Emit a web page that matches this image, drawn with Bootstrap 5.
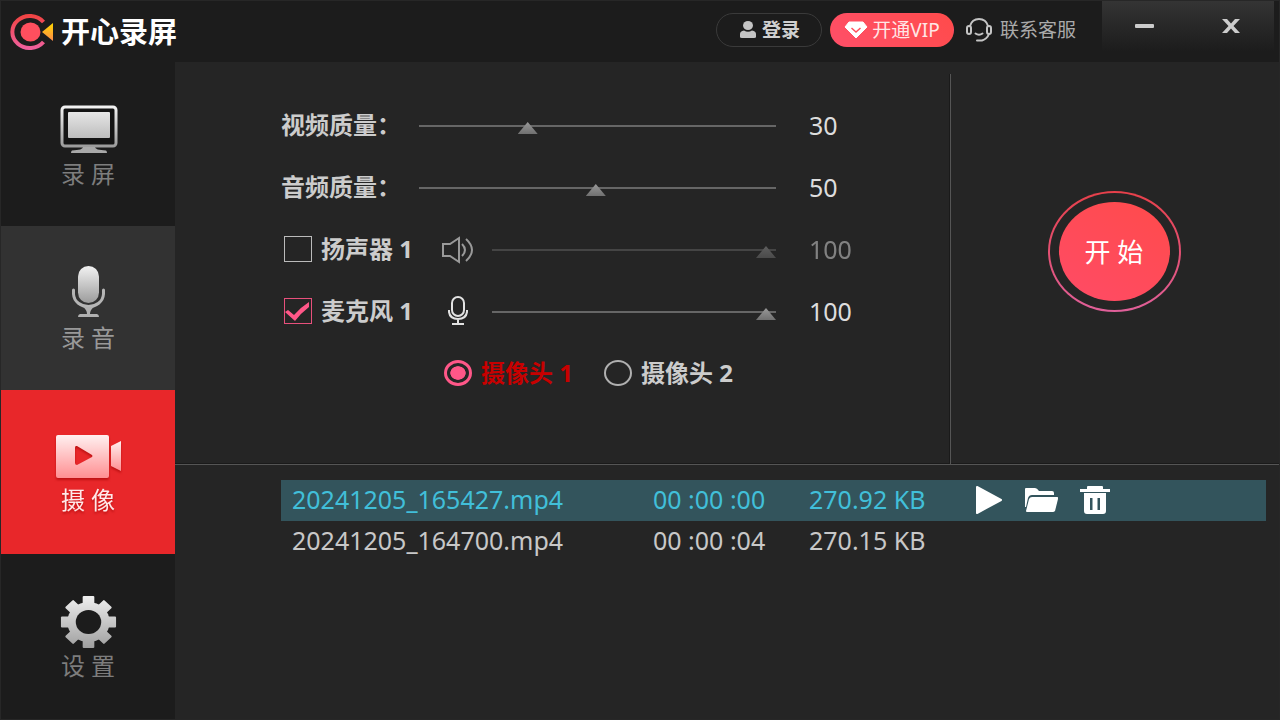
<!DOCTYPE html>
<html lang="zh-CN">
<head>
<meta charset="utf-8">
<meta name="viewport" content="width=device-width, initial-scale=1">
<title>开心录屏</title>
<link href="https://cdn.jsdelivr.net/npm/bootstrap@5.3.0/dist/css/bootstrap.min.css" rel="stylesheet">
<style>
  body {
    background: #252525;
    color: #ccc;
    font-family: "Noto Sans", "Noto Sans CJK SC", sans-serif;
    font-size: 24px;
    line-height: 32px;
  }
  .app-window { border: 1px solid #272727; }
  .app-bar { background: #1c1c1c; height: 61px; }
  .app-title { font-size: 29px; line-height: 36px; color: #fff; }
  .brand { gap: 6px; padding: 13px 0 0 8px; }
  .pill { height: 34px; border-radius: 17px; font-size: 19px; line-height: 24px; }
  .pill-login { border: 1px solid #3a3a3a; width: 106px; color: #d0d0d0; font-weight: 600; }
  .pill-vip { background: linear-gradient(45deg, #ff4f68, #ff4b4b); width: 124px; color: #ffe6e6; }
  .support { color: #aaa; font-size: 19px; line-height: 24px; }
  .window-tools {
    width: 172px; height: 50px; margin-left: 26px; margin-right: 5px; padding-bottom: 4px;
    background: linear-gradient(#343434, #1c1c1c);
  }
  .app-side { width: 174px; background: #1c1c1c; }
  .side-item { height: 164px; padding-top: 40px; color: #7d7d7d; }
  .side-item.hovered { background: #323232; color: #999; }
  .side-item.active { background: #e8272a; color: #ffe9e9; }
  .side-item.active span { line-height: 28px; }
  .side-item.active svg, .side-item.active span { filter: drop-shadow(0 2px 1px #9008); }

  .panel-top { min-height: 403px; border-bottom: 1px solid #555; box-shadow: 0 -1px 0 #1a1a1a inset; }
  .settings { padding: 33px 93px 0 106px; }
  .setting-row { height: 62px; }
  .setting-row label, .setting-value { padding-bottom: 3px; }
  .setting-label { width: 138px; }
  .source-label { width: 161px; }
  .source-icon { width: 50px; }
  .setting-value { width: 48px; margin-left: 33px; font-size: 25px; color: #ddd; }
  .dimmed { opacity: .5; }
  .form-check-input {
    width: 28px; height: 26px; margin: 0 9px 0 3px;
    background-color: transparent; border: 1px solid #bbb;
  }
  .form-check-input[type=checkbox] { border-radius: 0; }
  .form-check-input[type=radio] { border: 2px solid #b0b0b0; }
  .form-check-input[type=checkbox]:checked {
    background-color: transparent; border-color: #e8507c; background-size: 100% 100%;
    background-image: url("data:image/svg+xml,%3Csvg xmlns='http://www.w3.org/2000/svg' viewBox='0 0 26 24' preserveAspectRatio='none'%3E%3Cpath fill='%23ff5788' d='M0 13L3 11L9 16Q16 8 24 3L24 8Q16 14 10 22Z'/%3E%3C/svg%3E");
  }
  .form-check-input[type=radio]:checked {
    background-color: transparent; border: 3px solid #ff5788;
    background-image: radial-gradient(ellipse 8px 7px, #ff5788 92%, transparent);
  }
  .form-check-input:focus { box-shadow: none; }
  .cam-row { padding-left: 160px; gap: 28px; }
  .cam-row .form-check-input:checked + span { color: #c80000; }
  .form-range { width: auto; min-width: 0; }
  .form-range::-webkit-slider-runnable-track { height: 2px; background: #666; border-radius: 0; }
  .form-range::-webkit-slider-thumb {
    width: 20px; height: 12px; margin-top: -3px; border: 0; border-radius: 0; box-shadow: none;
    background: linear-gradient(#999, #707070);
    clip-path: polygon(50% 0, 100% 100%, 0 100%);
  }
  .form-range:disabled::-webkit-slider-thumb { background: linear-gradient(#999, #707070); }
  .form-range:focus::-webkit-slider-thumb { box-shadow: none; }

  .start-side { width: 329px; margin-top: 12px; border-left: 1px solid #555; box-shadow: -1px 0 0 #1a1a1a; padding: 117px 2px 0 0; }
  .start-btn {
    width: 133px; height: 121px; border: 2px solid transparent; border-radius: 50%; padding: 9px;
    background: linear-gradient(#252525, #252525) padding-box, linear-gradient(#e8404a, #e0609a) border-box;
  }
  .start-btn span {
    border-radius: 50%; color: #fff; font-size: 26px;
    background: linear-gradient(30deg, #ff4b66, #ff4b4b);
  }

  .files { padding: 15px 13px 15px 106px; }
  .file-table { table-layout: fixed; font-size: 25px; line-height: 33px; color: #c8c8c8; }
  .file-table td { padding: 3px 0 5px; height: 41px; white-space: nowrap; vertical-align: middle; }
  .file-table td:first-child { padding-left: 11px; }
  .file-table .selected { background: #33545c; color: #41bfd9; }
  .file-actions { gap: 22px; }
  .col-name { width: 372px; } .col-time { width: 156px; } .col-size { width: 166px; }
</style>
</head>
<body>
<svg width="0" height="0" class="position-absolute" aria-hidden="true">
  <defs>
    <linearGradient id="silver" x1="0" y1="0" x2="0" y2="1"><stop offset="0" stop-color="#f2f2f2"/><stop offset="1" stop-color="#9c9c9c"/></linearGradient>
    <linearGradient id="glass" x1="0" y1="0" x2="0" y2="1"><stop offset="0" stop-color="#e6e6e6"/><stop offset="1" stop-color="#bdbdbd"/></linearGradient>
    <linearGradient id="rose" x1="0" y1="0" x2="0" y2="1"><stop offset="0" stop-color="#fff0f0"/><stop offset="1" stop-color="#ff8f92"/></linearGradient>
    <linearGradient id="brandRing" x1="0" y1="0" x2="0" y2="1"><stop offset="0" stop-color="#f04444"/><stop offset="1" stop-color="#f0609c"/></linearGradient>
    <linearGradient id="gold" x1="0" y1="0" x2="0" y2="1"><stop offset="0" stop-color="#ffd800"/><stop offset="1" stop-color="#ff8a4a"/></linearGradient>
  </defs>
</svg>

<div class="app-window min-vh-100 d-flex flex-column">
  <header class="app-bar d-flex align-items-start">
    <div class="brand d-flex align-items-center">
      <svg width="46" height="36" viewBox="0 0 46 36" aria-hidden="true">
        <path d="M34.500 8A17.500 16 0 1 0 34.500 28" fill="none" stroke="url(#brandRing)" stroke-width="4"/>
        <ellipse cx="21.500" cy="18" rx="10" ry="9.500" fill="#ff4f5e"/>
        <path d="M33 18L44 9V27Z" fill="url(#gold)"/>
      </svg>
      <h1 class="app-title fw-bold m-0">开心录屏</h1>
    </div>
    <div class="ms-auto d-flex align-items-center gap-2 pt-2 mt-1">
      <button type="button" class="btn pill pill-login p-0 d-flex align-items-center justify-content-center gap-1">
        <svg width="20" height="18" viewBox="0 0 20 18" fill="#c4c4c4" aria-hidden="true"><ellipse cx="10" cy="4.500" rx="5" ry="4.500"/><path d="M2 16V13Q2 10 6 9.500Q10 12 14 9.500Q18 10 18 13V16Q18 17 16 17H4Q2 17 2 16Z"/></svg>
        登录
      </button>
      <button type="button" class="btn pill pill-vip p-0 d-flex align-items-center justify-content-center gap-1">
        <svg width="24" height="18" viewBox="0 0 24 18" aria-hidden="true"><path d="M5 1H19L23 6L12 17L1 6Z" fill="#fff" stroke="#fff" stroke-linejoin="round"/><path d="M7.500 7L12 11L16.500 7" fill="none" stroke="#ff4f5c" stroke-width="1.500"/></svg>
        开通VIP
      </button>
      <a href="#" class="support text-decoration-none d-flex align-items-center gap-2 ms-1">
        <svg width="26" height="24" viewBox="0 0 26 24" fill="none" stroke="#c4c4c4" stroke-width="2" stroke-linecap="round" aria-hidden="true"><path d="M4 8Q6 1 13 1Q20 1 22 8M23 16Q21 21 16 22.500H11M9.500 15.500Q13 18 16.500 15.500"/><rect x="1" y="8" width="4" height="8" rx="2"/><rect x="21" y="8" width="4" height="8" rx="2"/></svg>
        联系客服
      </a>
    </div>
    <div class="window-tools d-flex">
      <button type="button" class="btn p-0 border-0 flex-fill" aria-label="最小化"><svg width="20" height="16" viewBox="0 0 20 16"><rect x="0" y="6" width="19" height="4" rx="1" fill="#ccc"/></svg></button>
      <button type="button" class="btn p-0 border-0 flex-fill" aria-label="关闭"><svg width="20" height="16" viewBox="0 0 20 16"><path d="M1 1H6L10 5.500L14 1H19L12.500 8L19 15H14L10 10.500L6 15H1L7.500 8Z" fill="#ccc"/></svg></button>
    </div>
  </header>

  <div class="d-flex flex-fill">
    <nav class="app-side flex-shrink-0">
      <a href="#" class="side-item d-flex flex-column align-items-center text-decoration-none">
        <svg width="66" height="56" viewBox="0 0 66 56" aria-hidden="true">
          <rect x="7" y="5" width="54" height="39" rx="3" fill="#141414" stroke="url(#silver)" stroke-width="3"/>
          <rect x="13" y="10" width="42" height="26" rx="1" fill="url(#glass)"/>
          <path d="M28 45H40Q40 48 51 48.500Q52 49 52 51H16Q16 49 17 48.500Q28 48 28 45Z" fill="#a8a8a8"/>
        </svg>
        <span>录 屏</span>
      </a>
      <a href="#" class="side-item hovered d-flex flex-column align-items-center text-decoration-none">
        <svg width="66" height="56" viewBox="0 0 66 56" aria-hidden="true">
          <rect x="23" y="0" width="21" height="37" rx="10.500" fill="url(#silver)"/>
          <path d="M18.500 24V28C19 36 26 40.500 33.500 40.500S48 36 48.500 28V24" fill="none" stroke="#b5b5b5" stroke-width="3" stroke-linecap="round"/>
          <path d="M28 41H39Q35 44 35 48H42Q44 48.500 44 51H23Q23 48.500 25 48H32Q32 44 28 41Z" fill="#b0b0b0"/>
        </svg>
        <span>录 音</span>
      </a>
      <a href="#" class="side-item active d-flex flex-column align-items-center text-decoration-none" aria-current="page">
        <svg width="66" height="56" viewBox="0 0 66 56" aria-hidden="true">
          <path fill="url(#rose)" fill-rule="evenodd" d="M3 5H52Q54 5 54 7V46Q54 48 52 48H3Q1 48 1 46V7Q1 5 3 5ZM21 16Q20 16 20 18V33Q20 35 22 35L37 27Q38 26 37 25L22 16Z"/>
          <path fill="url(#rose)" d="M56 16L66 11V41L56 36Z"/>
        </svg>
        <span>摄 像</span>
      </a>
      <a href="#" class="side-item d-flex flex-column align-items-center text-decoration-none">
        <svg width="66" height="56" viewBox="0 0 66 56" aria-hidden="true">
          <mask id="gearMask">
            <g transform="translate(33.500 28) scale(1.060 1)" fill="#fff">
              <circle r="20"/>
              <rect x="-5.500" y="-26" width="11" height="52" rx="1"/>
              <rect x="-5.500" y="-26" width="11" height="52" rx="1" transform="rotate(45)"/>
              <rect x="-5.500" y="-26" width="11" height="52" rx="1" transform="rotate(90)"/>
              <rect x="-5.500" y="-26" width="11" height="52" rx="1" transform="rotate(135)"/>
              <circle r="12" fill="#000"/>
            </g>
          </mask>
          <rect x="0" y="0" width="66" height="56" fill="url(#silver)" mask="url(#gearMask)"/>
        </svg>
        <span>设 置</span>
      </a>
    </nav>

    <main class="flex-fill d-flex flex-column">
      <section class="panel-top d-flex">
        <form class="settings flex-fill">
          <div class="setting-row d-flex align-items-center">
            <label class="setting-label fw-bold" for="videoQuality">视频质量：</label>
            <input type="range" class="form-range flex-fill" id="videoQuality" min="1" max="100" value="30">
            <output class="setting-value" for="videoQuality">30</output>
          </div>
          <div class="setting-row d-flex align-items-center">
            <label class="setting-label fw-bold" for="audioQuality">音频质量：</label>
            <input type="range" class="form-range flex-fill" id="audioQuality" min="1" max="100" value="50">
            <output class="setting-value" for="audioQuality">50</output>
          </div>
          <div class="setting-row d-flex align-items-center">
            <label class="source-label fw-bold d-flex align-items-center"><input type="checkbox" class="form-check-input"><span>扬声器 1</span></label>
            <div class="source-icon"><svg width="32" height="28" viewBox="0 0 32 28" fill="none" stroke="#999" stroke-width="2" aria-hidden="true" class="d-block"><path d="M1 8H8L17 2V26L8 20H1ZM20 8Q26 14 20 20M24 3Q36 14 24 25"/></svg></div>
            <input type="range" class="form-range flex-fill dimmed" aria-label="扬声器音量" min="1" max="100" value="100" disabled>
            <output class="setting-value dimmed">100</output>
          </div>
          <div class="setting-row d-flex align-items-center">
            <label class="source-label fw-bold d-flex align-items-center"><input type="checkbox" class="form-check-input" checked><span>麦克风 1</span></label>
            <div class="source-icon"><svg width="32" height="32" viewBox="0 0 32 32" fill="none" stroke="#e2e2e2" stroke-width="2" aria-hidden="true" class="d-block"><rect x="10" y="1" width="12" height="19" rx="6"/><path d="M7 14V16Q8 23 16 23Q24 23 25 16V14M16 23V28M10 28H22"/></svg></div>
            <input type="range" class="form-range flex-fill" aria-label="麦克风音量" min="1" max="100" value="100">
            <output class="setting-value">100</output>
          </div>
          <div class="setting-row cam-row d-flex align-items-center fw-bold">
            <label class="d-flex align-items-center"><input type="radio" name="camera" class="form-check-input" checked><span>摄像头 1</span></label>
            <label class="d-flex align-items-center"><input type="radio" name="camera" class="form-check-input"><span>摄像头 2</span></label>
          </div>
        </form>
        <div class="start-side flex-shrink-0 d-flex justify-content-center align-items-start">
          <button type="button" class="start-btn d-flex"><span class="flex-fill align-self-stretch d-flex align-items-center justify-content-center">开 始</span></button>
        </div>
      </section>

      <section class="files">
        <table class="file-table w-100">
          <colgroup><col class="col-name"><col class="col-time"><col class="col-size"><col></colgroup>
          <tbody>
            <tr class="selected">
              <td>20241205_165427.mp4</td><td>00 :00 :00</td><td>270.92 KB</td>
              <td>
                <div class="file-actions d-flex align-items-center">
                  <button type="button" class="btn p-0 border-0 d-flex" aria-label="播放"><svg width="28" height="30" viewBox="0 0 28 30"><path d="M2 2L26 15L2 28Z" fill="#fff" stroke="#fff" stroke-width="2" stroke-linejoin="round"/></svg></button>
                  <button type="button" class="btn p-0 border-0 d-flex" aria-label="打开文件夹"><svg width="33" height="26" viewBox="0 0 33 26" fill="#fff"><path d="M0 2Q0 1 1 1H10Q12 1 14 4H27Q29 4 29 6V8H7Q4 8 3 11L1 20L0 20Z"/><path d="M7 10H32Q34 10 33 12L30 24Q29 25 28 25H2Q1 25 1 24L4 12Q5 10 7 10Z"/></svg></button>
                  <button type="button" class="btn p-0 border-0 d-flex" aria-label="删除"><svg width="30" height="30" viewBox="0 0 30 30" fill="#fff"><path d="M7 4V2Q7 1 8 1H22Q23 1 23 2V4H30V7H0V4Z"/><path fill-rule="evenodd" d="M4 8H26V26Q26 29 23 29H7Q4 29 4 26ZM10 13V25H12.500V13ZM17.500 13V25H20V13Z"/></svg></button>
                </div>
              </td>
            </tr>
            <tr><td>20241205_164700.mp4</td><td>00 :00 :04</td><td>270.15 KB</td><td></td></tr>
          </tbody>
        </table>
      </section>
    </main>
  </div>
</div>
<script src="https://cdn.jsdelivr.net/npm/bootstrap@5.3.0/dist/js/bootstrap.bundle.min.js"></script>
</body>
</html>
